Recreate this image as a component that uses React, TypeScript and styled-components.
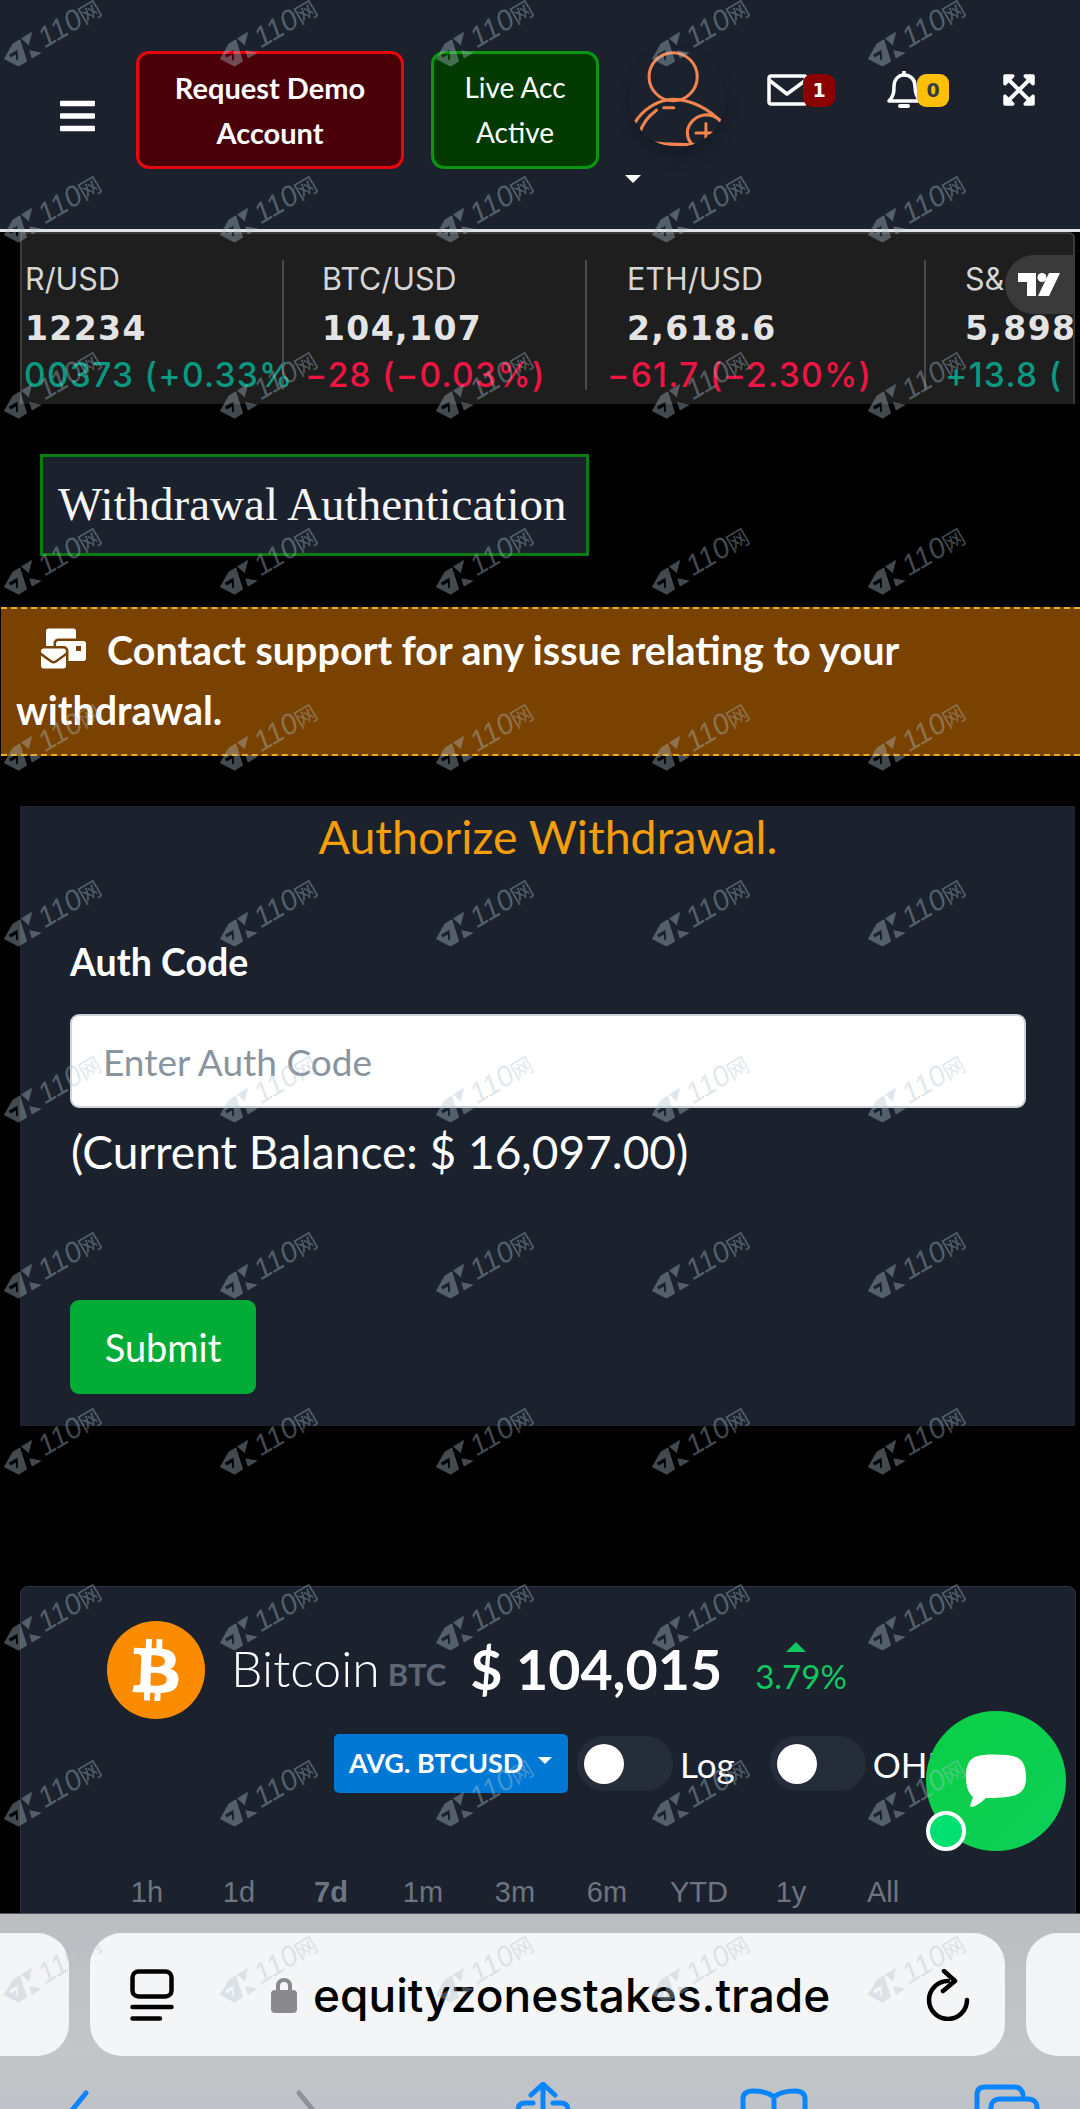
import React from 'react';
import styled, { createGlobalStyle } from 'styled-components';
import { FaBars, FaBtc, FaExpandArrowsAlt, FaMailBulk } from 'react-icons/fa';

const GlobalStyle = createGlobalStyle`
  html, body {
    margin: 0;
    padding: 0;
    background: #000;
  }
  * {
    box-sizing: border-box;
  }
`;

const sans = `Lato, 'Noto Sans', sans-serif`;
const navy = '#1b222e';

const Page = styled.div`
  position: relative;
  width: 1080px;
  height: 2109px;
  overflow: hidden;
  background: #000;
  font-family: ${sans};
  color: #fff;
`;

// top nav
const Header = styled.header`
  display: flex;
  align-items: flex-start;
  height: 232px;
  padding: 51px 0 0 60px;
  background: ${navy};
  border-bottom: 3px solid #dfe3e6;
`;

const Burger = styled.div`
  display: flex;
  width: 35px;
  margin: 45px 41px 0 0;
  font-size: 40px;
`;

const NavButton = styled.div<{ $live?: boolean }>`
  display: flex;
  align-items: center;
  justify-content: center;
  width: ${(p) => (p.$live ? '168px' : '268px')};
  height: 118px;
  margin-right: ${(p) => (p.$live ? '30px' : '27px')};
  border: 3px solid ${(p) => (p.$live ? '#0a960f' : '#e6070f')};
  border-radius: 13px;
  background: ${(p) => (p.$live ? '#033a00' : '#4a0009')};
  font-size: ${(p) => (p.$live ? '28px' : '29px')};
  line-height: 45px;
  font-weight: ${(p) => (p.$live ? 400 : 700)};
  text-align: center;
`;

const AvatarBox = styled.div`
  display: flex;
  flex-direction: column;
  width: 97px;
  margin-right: 41px;
`;

const AvatarIcon = styled.svg`
  display: block;
  width: 97px;
  height: 97px;
  margin-top: -1px;
  border-radius: 50%;
  box-shadow: 0 9px 16px rgba(0, 0, 0, 0.22);
`;

const Caret = styled.span`
  width: 0;
  height: 0;
  margin: 28px 0 0 -4px;
  border-left: 8px solid transparent;
  border-right: 8px solid transparent;
  border-top: 8px solid #fff;
`;

const NavIcon = styled.div<{ $gap: number }>`
  display: flex;
  align-items: center;
  height: 36px;
  margin: 21px ${(p) => p.$gap}px 0 0;
`;

const Badge = styled.span<{ $amber?: boolean }>`
  display: flex;
  align-items: center;
  justify-content: center;
  width: 32px;
  height: 33px;
  margin-left: -5px;
  border-radius: 9px;
  background: ${(p) => (p.$amber ? '#fdbf08' : '#8b0000')};
  color: ${(p) => (p.$amber ? '#343a40' : '#fff')};
  font-family: 'DejaVu Sans', sans-serif;
  font-size: 19px;
  font-weight: 700;
`;

const Expand = styled.div`
  display: flex;
  margin-top: 21px;
  font-size: 36px;
`;

// ticker tape
const Ticker = styled.section`
  position: relative;
  display: flex;
  height: 172px;
  margin: 0 5px 0 20px;
  overflow: hidden;
  background: #1e1e1e;
  border: 2px solid #3a3a3a;
  border-bottom: 0;
  border-radius: 0 6px 0 0;
  font-family: Inter, sans-serif;
`;

const Cell = styled.div<{ $width: number; $pad: number }>`
  flex: 0 0 ${(p) => p.$width}px;
  min-width: 0;
  padding: 29px 0 0 ${(p) => p.$pad}px;
  white-space: nowrap;
`;

const Divider = styled.span`
  flex: 0 0 2px;
  height: 130px;
  margin-top: 26px;
  background: #4a4a4a;
`;

const Pair = styled.div`
  font-size: 30.500px;
  line-height: 32px;
  color: #d6d6d6;
`;

const Quote = styled.div`
  margin-top: 15px;
  font-family: 'DejaVu Sans', sans-serif;
  font-size: 33px;
  line-height: 38px;
  font-weight: 700;
  letter-spacing: 1.400px;
  color: #e4e4e4;
`;

const Change = styled.div<{ $down?: boolean; $shift: number }>`
  margin: 8px 0 0 ${(p) => p.$shift}px;
  font-size: 33.500px;
  line-height: 38px;
  font-weight: 500;
  letter-spacing: 1.300px;
  color: ${(p) => (p.$down ? '#ee1444' : '#089981')};
`;

const TvTag = styled.div`
  position: absolute;
  top: 21px;
  right: 0;
  display: flex;
  align-items: center;
  justify-content: flex-end;
  width: 68px;
  height: 59px;
  padding-right: 13px;
  border-radius: 30px 0 0 30px;
  background: #3a3a3a;
`;

const Heading = styled.div`
  display: flex;
  width: 549px;
  height: 102px;
  margin: 50px 0 0 40px;
  padding: 22px 0 0 15px;
  background: ${navy};
  border: 3px solid #0a7d12;
  font-family: 'Liberation Serif', serif;
  font-size: 47px;
  line-height: 50px;
  color: #f6f6f6;
`;

const Notice = styled.div`
  height: 149px;
  margin: 51px 0 0 1px;
  padding: 11px 15px;
  background: #7a4200;
  border-style: dashed;
  border-color: #e8b020;
  border-width: 2px 0;
  font-size: 39.500px;
  line-height: 60px;
  font-weight: 700;
  svg {
    margin: 0 21px 0 25px;
    vertical-align: -6px;
  }
`;

const FormCard = styled.section`
  height: 620px;
  margin: 50px 5px 0 20px;
  padding: 0 49px 0 50px;
  background: ${navy};
`;

const FormTitle = styled.h2`
  margin: 0;
  padding-top: 2px;
  font-size: 46.500px;
  line-height: 56px;
  font-weight: 400;
  text-align: center;
  color: #f59e0b;
`;

const Label = styled.label`
  display: block;
  margin-top: 76px;
  font-size: 37.500px;
  line-height: 44px;
  font-weight: 700;
`;

const Input = styled.div`
  display: flex;
  align-items: center;
  height: 94px;
  margin-top: 30px;
  padding-left: 31px;
  background: #fff;
  border: 2px solid #ced4da;
  border-radius: 9px;
  font-size: 37px;
  color: #8a949e;
`;

const Balance = styled.p`
  margin: 16px 0 0 1px;
  font-size: 46px;
  line-height: 56px;
`;

const Submit = styled.button`
  display: block;
  width: 186px;
  height: 94px;
  margin-top: 120px;
  padding: 0;
  background: #03ab37;
  border: 0;
  border-radius: 9px;
  font-family: ${sans};
  font-size: 38px;
  color: #fff;
`;

// price widget
const CoinCard = styled.section`
  height: 327px;
  margin: 160px 4px 0 20px;
  background: ${navy};
  border: 1px solid #2a3240;
  border-bottom: 0;
  border-radius: 8px 8px 0 0;
  overflow: hidden;
  font-family: Lato, sans-serif;
`;

const CoinRow = styled.div`
  display: flex;
  align-items: center;
  height: 98px;
  margin: 34px 0 0 86px;
`;

const Coin = styled.div`
  display: flex;
  align-items: center;
  justify-content: center;
  width: 98px;
  height: 98px;
  border-radius: 50%;
  background: #fb8c00;
  svg {
    transform: rotate(2deg);
  }
`;

const CoinName = styled.span`
  margin: -4px 0 0 26px;
  font-size: 50px;
  font-weight: 300;
`;

const CoinSymbol = styled.span`
  margin: 8px 0 0 8px;
  font-size: 31px;
  font-weight: 700;
  color: #5e6676;
`;

const Price = styled.span`
  margin: -4px 0 0 24px;
  font-size: 55.500px;
  font-weight: 700;
`;

const Delta = styled.div`
  display: flex;
  flex-direction: column;
  align-items: center;
  margin: -5px 0 0 33px;
  font-size: 33px;
  line-height: 36px;
  color: #10c860;
  i {
    width: 0;
    height: 0;
    margin: 0 10px 6px 0;
    border-left: 10px solid transparent;
    border-right: 10px solid transparent;
    border-bottom: 10px solid #10c860;
  }
`;

const Controls = styled.div`
  display: flex;
  align-items: center;
  height: 59px;
  margin: 15px 0 0 313px;
  white-space: nowrap;
`;

const SourceButton = styled.div`
  display: flex;
  align-items: center;
  width: 234px;
  height: 59px;
  padding: 0 0 2px 15px;
  border-radius: 5px;
  background: #0078d4;
  font-size: 27px;
  font-weight: 700;
  i {
    width: 0;
    height: 0;
    margin: -4px 0 0 15px;
    border-left: 7px solid transparent;
    border-right: 7px solid transparent;
    border-top: 7px solid #fff;
  }
`;

const Toggle = styled.div`
  display: flex;
  align-items: center;
  width: 96px;
  height: 55px;
  margin-left: 9px;
  padding-left: 7px;
  border-radius: 28px;
  background: #262d3a;
  i {
    width: 40px;
    height: 40px;
    border-radius: 50%;
    background: #fff;
  }
`;

const ToggleLabel = styled.span<{ $gap: number }>`
  margin: 0 ${(p) => p.$gap}px 0 7px;
  font-size: 35px;
`;

const Ranges = styled.div`
  display: grid;
  grid-template-columns: repeat(9, 92px);
  margin: 81px 0 0 80px;
  font-family: 'Liberation Sans', sans-serif;
  font-size: 29px;
  line-height: 36px;
  text-align: center;
  color: #6e7582;
`;

const Range = styled.span<{ $active?: boolean }>`
  font-weight: ${(p) => (p.$active ? 700 : 400)};
`;

// floating chat button
const ChatBubble = styled.div`
  position: absolute;
  left: 926px;
  top: 1711px;
  display: flex;
  align-items: center;
  justify-content: center;
  width: 140px;
  height: 140px;
  border-radius: 50%;
  background: linear-gradient(135deg, #0bcf45, #0ccf58);
`;

const ChatDot = styled.span`
  position: absolute;
  left: 0;
  top: 100px;
  width: 40px;
  height: 40px;
  border-radius: 50%;
  background: #00e070;
  border: 4px solid #fff;
`;

// safari bottom bar
const Browser = styled.div`
  height: 197px;
  padding-top: 19px;
  background: linear-gradient(180deg, #bbbdc0, #c3c5c8 70%, #bfc2c6);
  border-top: 1px solid #4b525c;
`;

const TabStrip = styled.div`
  display: flex;
  gap: 21px;
  height: 123px;
`;

const SideTab = styled.div<{ $right?: boolean }>`
  flex: 0 0 ${(p) => (p.$right ? '54px' : '69px')};
  background: #f3f4f5;
  border-radius: ${(p) => (p.$right ? '32px 0 0 32px' : '0 32px 32px 0')};
`;

const AddressBar = styled.div`
  display: flex;
  align-items: center;
  flex: 0 0 915px;
  padding-left: 40px;
  background: #f4f5f6;
  border-radius: 32px;
  color: #000;
`;

const Url = styled.span`
  margin: 0 96px 0 16px;
  width: 517px;
  font-family: Inter, sans-serif;
  font-size: 46px;
  font-weight: 500;
  white-space: nowrap;
`;

const ToolRow = styled.div`
  display: grid;
  grid-template-columns: 235px 220px 225px 234px 66px;
  margin-top: 26px;
  padding-left: 60px;
`;

const ToolIcon = styled.svg<{ $width: number; $muted?: boolean }>`
  display: block;
  width: ${(p) => p.$width}px;
  height: 40px;
  fill: none;
  stroke: ${(p) => (p.$muted ? '#8e9196' : '#0a84ff')};
  stroke-width: 5;
  stroke-linecap: round;
  stroke-linejoin: round;
`;

// fx110 stamp that sits over the whole shot
const Stamps = styled.div`
  position: absolute;
  inset: 0;
  display: grid;
  grid-template-columns: repeat(5, 216px);
  grid-auto-rows: 176px;
  padding-left: 3px;
  pointer-events: none;
`;

const Stamp = styled.div`
  display: flex;
  align-items: center;
  justify-content: center;
  width: 97px;
  height: 66px;
  color: rgba(176, 195, 208, 0.38);
  font-family: 'Liberation Sans', 'Noto Sans CJK SC', sans-serif;
  font-size: 29px;
  line-height: 24px;
  font-style: italic;
  white-space: nowrap;
  transform: rotate(-31deg);
  svg {
    flex: none;
    margin-right: 1px;
  }
  em {
    font-family: 'Noto Sans CJK SC', sans-serif;
    font-size: 22px;
    font-style: normal;
  }
`;

const tickers = [
  { pair: 'R/USD', quote: '12234', change: '00373 (+0.33%', width: 260, pad: 3, shift: -1, down: false },
  { pair: 'BTC/USD', quote: '104,107', change: '−28 (−0.03%)', width: 301, pad: 38, shift: -17, down: true },
  { pair: 'ETH/USD', quote: '2,618.6', change: '−61.7 (−2.30%)', width: 337, pad: 40, shift: -20, down: true },
  { pair: 'S&', quote: '5,898', change: '+13.8 (', width: 140, pad: 39, shift: -20, down: false },
];

const ranges = ['1h', '1d', '7d', '1m', '3m', '6m', 'YTD', '1y', 'All'];

function AvatarGlyph() {
  return (
    <AvatarIcon viewBox="200 85 290 290" fill="none" stroke="#f4844f" strokeWidth="9" strokeLinecap="round">
      <circle cx="332" cy="165" r="72" />
      <path d="M216 305C240 262 290 232 332 232C385 232 440 262 478 302" />
      <path d="M232 335C240 300 262 280 282 265" />
      <path d="M304 258H334" />
      <path d="M248 358C290 368 340 368 395 368" />
      <path d="M478 302A58 58 0 0 0 375 325C372 350 385 368 405 378" />
      <path d="M430 305V360M400 333H460" />
    </AvatarIcon>
  );
}

function StampMark() {
  return (
    <Stamp>
      <svg width="40" height="24" viewBox="0 0 36 22" fill="currentColor">
        <path fillRule="evenodd" d="M0 9L14 1H22L17 22H8ZM6 8L15 8L11 16H9L11.500 11H6Z" />
        <path d="M23 1H35L26 10ZM24 14L33 22H22Z" />
      </svg>
      110<em>网</em>
    </Stamp>
  );
}

export default function App() {
  return (
    <Page>
      <GlobalStyle />
      <Header>
        <Burger>
          <FaBars />
        </Burger>
        <NavButton>
          Request Demo
          <br />
          Account
        </NavButton>
        <NavButton $live>
          Live Acc
          <br />
          Active
        </NavButton>
        <AvatarBox>
          <AvatarGlyph />
          <Caret />
        </AvatarBox>
        <NavIcon $gap={52}>
          <svg width="41" height="32" viewBox="0 0 41 32" fill="none" stroke="#fff" strokeWidth="3.500" strokeLinejoin="round">
            <rect x="2" y="2" width="37" height="28" rx="2" />
            <path d="M2 6L20 20L39 6" />
          </svg>
          <Badge>1</Badge>
        </NavIcon>
        <NavIcon $gap={52}>
          <svg width="35" height="40" viewBox="0 0 35 40" fill="none" stroke="#fff" strokeWidth="3.500" strokeLinejoin="round">
            <path d="M17 1V5" />
            <path d="M2 31C7 26 7 21 7 16C7 9 12 5 17 5C23 5 28 9 28 16C28 21 29 26 33 31Z" />
            <path d="M13 36H21" strokeWidth="4" strokeLinecap="round" />
          </svg>
          <Badge $amber>0</Badge>
        </NavIcon>
        <Expand>
          <FaExpandArrowsAlt />
        </Expand>
      </Header>

      <Ticker>
        {tickers.map((t, i) => (
          <React.Fragment key={t.pair}>
            {i > 0 && <Divider />}
            <Cell $width={t.width} $pad={t.pad}>
              <Pair>{t.pair}</Pair>
              <Quote>{t.quote}</Quote>
              <Change $down={t.down} $shift={t.shift}>
                {t.change}
              </Change>
            </Cell>
          </React.Fragment>
        ))}
        <TvTag>
          <svg width="42" height="24" viewBox="0 0 42 24" fill="#fff">
            <path d="M0 0H18V23H9V9H0Z" />
            <circle cx="24" cy="4.500" r="4.500" />
            <path d="M31 0H42L31 23H20Z" />
          </svg>
        </TvTag>
      </Ticker>

      <Heading>Withdrawal Authentication</Heading>

      <Notice>
        <FaMailBulk size={45} />
        Contact support for any issue relating to your withdrawal.
      </Notice>

      <FormCard>
        <FormTitle>Authorize Withdrawal.</FormTitle>
        <Label>Auth Code</Label>
        <Input>Enter Auth Code</Input>
        <Balance>(Current Balance: $ 16,097.00)</Balance>
        <Submit>Submit</Submit>
      </FormCard>

      <CoinCard>
        <CoinRow>
          <Coin>
            <FaBtc size={62} color="#fff" />
          </Coin>
          <CoinName>Bitcoin</CoinName>
          <CoinSymbol>BTC</CoinSymbol>
          <Price>$ 104,015</Price>
          <Delta>
            <i />
            3.79%
          </Delta>
        </CoinRow>
        <Controls>
          <SourceButton>
            AVG. BTCUSD
            <i />
          </SourceButton>
          <Toggle>
            <i />
          </Toggle>
          <ToggleLabel $gap={26}>Log</ToggleLabel>
          <Toggle>
            <i />
          </Toggle>
          <ToggleLabel $gap={0}>OHL</ToggleLabel>
        </Controls>
        <Ranges>
          {ranges.map((r) => (
            <Range key={r} $active={r === '7d'}>
              {r}
            </Range>
          ))}
        </Ranges>
      </CoinCard>

      <Browser>
        <TabStrip>
          <SideTab />
          <AddressBar>
            <svg width="44" height="52" viewBox="0 0 44 52" fill="none" stroke="#000" strokeWidth="4.500" strokeLinecap="round">
              <rect x="2.500" y="2.500" width="39" height="25" rx="6" />
              <path d="M2.500 38H41.500M2.500 49.500H30" />
            </svg>
            <svg width="26" height="36" viewBox="0 0 26 36" style={{ marginLeft: 97 }} fill="#8a8a8e">
              <path d="M7 15V9C7 5 9.500 3 13 3C16.500 3 19 5 19 9V15" fill="none" stroke="#8a8a8e" strokeWidth="4" />
              <rect y="13" width="26" height="23" rx="4" />
            </svg>
            <Url>equityzonestakes.trade</Url>
            <svg width="44" height="52" viewBox="0 0 44 52" fill="none" stroke="#000" strokeWidth="4.500" strokeLinecap="round" strokeLinejoin="round">
              <path d="M22 12A19 19 0 1 0 41 31" />
              <path d="M18 2L29 12L17 22" />
            </svg>
          </AddressBar>
          <SideTab $right />
        </TabStrip>
        <ToolRow>
          <ToolIcon $width={30} viewBox="0 0 30 40">
            <path d="M26 11L4 38" />
          </ToolIcon>
          <ToolIcon $width={30} $muted viewBox="0 0 30 40">
            <path d="M4 11L26 38" />
          </ToolIcon>
          <ToolIcon $width={56} viewBox="0 0 56 40">
            <path d="M28 3V30M16 13L28 2L40 13" />
            <path d="M18 21H10Q3 21 3 28V40M38 21H46Q53 21 53 28V40" />
          </ToolIcon>
          <ToolIcon $width={68} viewBox="0 0 68 40">
            <path d="M3 40V17Q3 9 13 9Q27 9 34 15Q41 9 55 9Q65 9 65 17V40M34 15V40" />
          </ToolIcon>
          <ToolIcon $width={66} viewBox="0 0 66 40">
            <path d="M3 36V13Q3 5 11 5H40Q48 5 49 13" />
            <rect x="17" y="17" width="46" height="32" rx="8" />
          </ToolIcon>
        </ToolRow>
      </Browser>

      <ChatBubble>
        <svg width="60" height="54" viewBox="0 0 60 54" fill="#fff">
          <path d="M12 2C22 0 40 0 50 3C58 6 60 14 60 24C60 34 56 40 46 42C36 44 26 44 20 44C14 50 8 53 5 53C3 52 6 47 7 43C1 38 0 30 0 22C0 12 3 4 12 2Z" />
        </svg>
        <ChatDot />
      </ChatBubble>

      <Stamps>
        {Array.from({ length: 60 }, (_, i) => (
          <StampMark key={i} />
        ))}
      </Stamps>
    </Page>
  );
}
